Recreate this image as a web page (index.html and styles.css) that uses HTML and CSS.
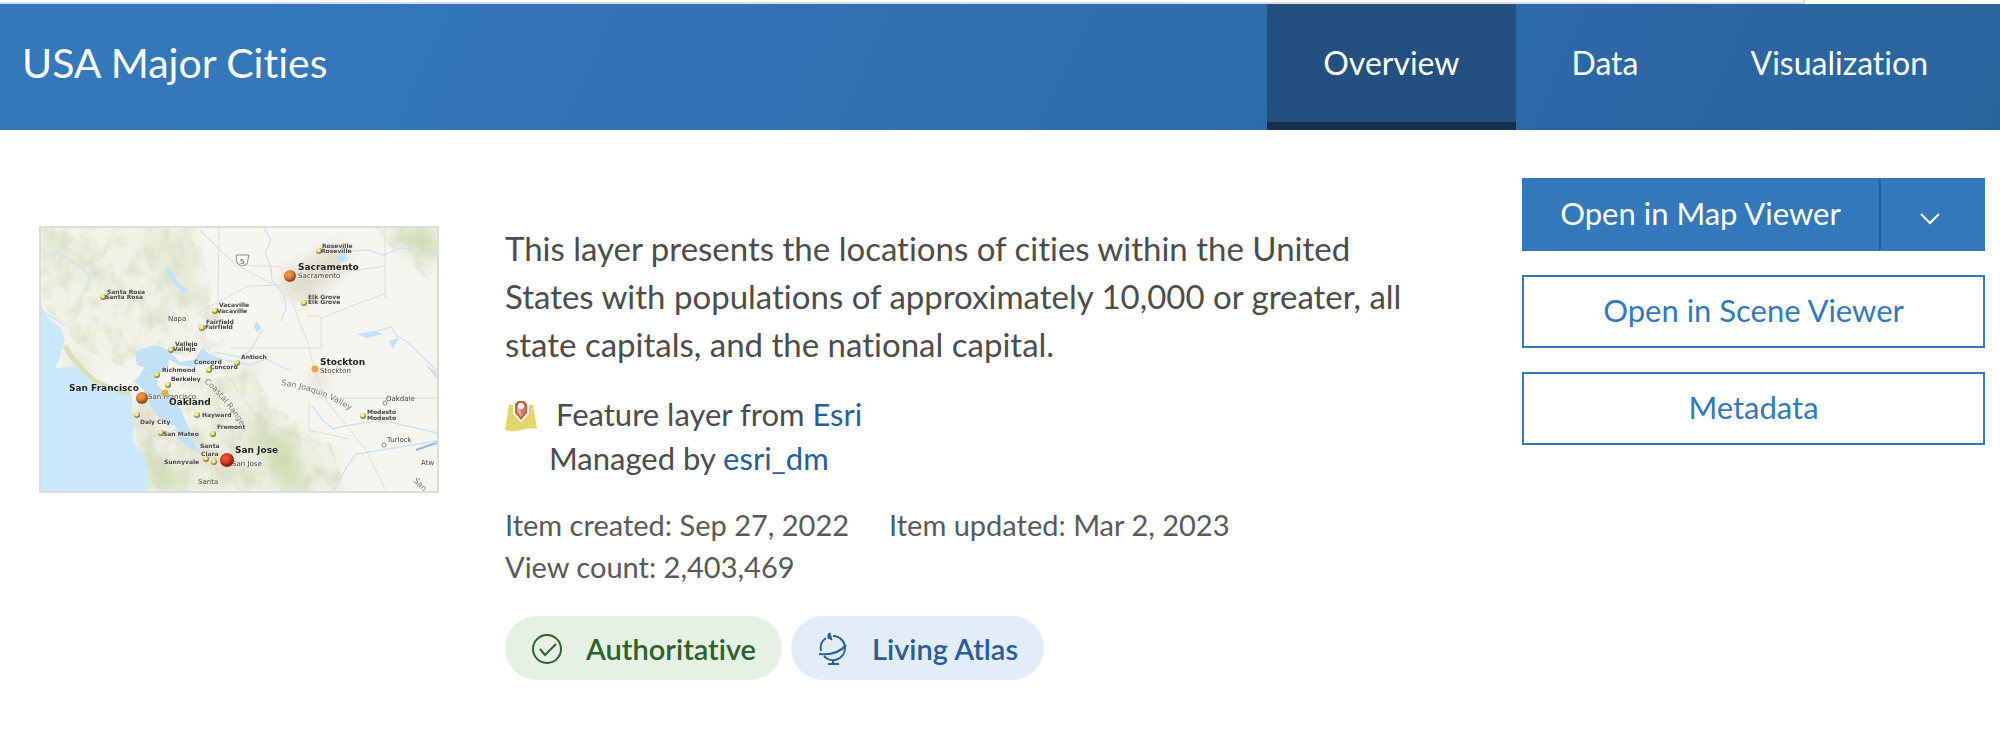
FILE: index.html
```html
<!DOCTYPE html>
<html lang="en">
<head>
<meta charset="utf-8">
<title>USA Major Cities</title>
<link rel="stylesheet" href="styles.css">
</head>
<body>
<div class="topline"></div>
<header class="banner">
  <h1 class="title">USA Major Cities</h1>
  <nav class="tabs">
    <a class="tab tab-active" href="#overview">Overview</a>
    <a class="tab" href="#data">Data</a>
    <a class="tab" href="#visualization">Visualization</a>
  </nav>
</header>
<main class="content">
  <svg class="thumb" viewBox="0 0 396 263" preserveAspectRatio="none" role="img" aria-label="Map of Northern California cities">
    <defs>
      <filter id="soft" x="-30%" y="-30%" width="160%" height="160%"><feGaussianBlur stdDeviation="8"/></filter>
      <filter id="pix" x="-5%" y="-5%" width="110%" height="110%"><feGaussianBlur stdDeviation=".7"/></filter>
      <filter id="relief" x="0" y="0" width="100%" height="100%"><feTurbulence type="fractalNoise" baseFrequency=".07 .05" numOctaves="4" seed="8"/><feColorMatrix values="0 0 0 0 .62  0 0 0 0 .67  0 0 0 0 .47  2.4 0 0 0 -1.05"/></filter>
      <radialGradient id="orange" cx="40%" cy="35%"><stop offset="0" stop-color="#f49a54"/><stop offset=".7" stop-color="#e27a2e"/><stop offset="1" stop-color="#9b5220"/></radialGradient>
      <radialGradient id="red" cx="40%" cy="35%"><stop offset="0" stop-color="#f35a3c"/><stop offset=".7" stop-color="#d93922"/><stop offset="1" stop-color="#8d2415"/></radialGradient>
      <radialGradient id="yellow" cx="40%" cy="35%"><stop offset="0" stop-color="#fffbae"/><stop offset=".6" stop-color="#eee36e"/><stop offset="1" stop-color="#827d4c"/></radialGradient>
      <clipPath id="hills"><path d="M0 0H155L170 60L190 110L170 135L120 122L94 130L90 190L100 263H305L290 215L235 180L210 140L190 150L150 150L120 165L105 175L94 145L40 120L0 75ZM335 0H396V60L345 15Z"/></clipPath>
    </defs>
    <rect width="396" height="263" fill="#f6f5f0"/>
    <g filter="url(#soft)">
      <path d="M0 0H145L165 60L150 110L95 130L60 135L0 85Z" fill="#f0f2e6"/>
      <path d="M100 0H150L158 80L130 70ZM0 10L50 20L60 45L0 40Z" fill="#e5ead5"/>
      <path d="M345 0H396V35L365 20Z" fill="#cfddb4"/>
      <path d="M150 150L200 150L240 185L300 230V263H120L100 225L140 225Z" fill="#eef0e2"/>
      <path d="M175 150L190 160L180 165ZM200 190L250 210L270 263H240ZM95 210L130 235L155 263H110ZM25 115L60 150L30 135Z" fill="#d3dfba"/>
      <path d="M240 45L255 40L300 15L305 35L265 75L245 65ZM270 145H285V160H270ZM95 170L110 180L115 210L95 205ZM115 205L200 235L210 255L180 245ZM190 140L220 140L210 155Z" fill="#dfdccb"/>
    </g>
    <g clip-path="url(#hills)"><rect width="396" height="263" filter="url(#relief)" opacity=".6"/></g>
    <g filter="url(#pix)">
      <path d="M0 78L7 90L20 100L24 112L18 132L14 140L28 139L34 136L46 146L60 157L78 161L91 166L91 182L94 193L91 208L94 217L102 224L107 243L106 263H0Z" fill="#cbe8fd"/>
      <path d="M24 118L30 128L43 143L54 153L65 158L77 163L89 165" fill="none" stroke="#d8e1ba" stroke-width="5"/>
      <path d="M94 127L99 121L115 117L127 122L139 134L153 132L161 120L170 127L184 132L166 136L151 139L137 137L128 131L127 140L116 146L117 157L127 169L140 181L146 196L155 218L160 224L150 221L139 213L135 198L122 195L114 184L108 176L103 162L93 153L99 147L103 139L96 137ZM124 38L133 46L135 52L148 64L142 65L132 55L125 45ZM295 28L302 24L308 31L298 35ZM215 93L220 99L217 105L213 99ZM316 106L334 103L342 106L325 110ZM348 113L358 110L352 121ZM384 136L396 145V151Z" fill="#c1e1f9"/>
      <g fill="none" stroke="#c9e3f5" stroke-width="1.3"><path d="M223 0L230 12L224 25L230 39L231 52L243 66L245 80L240 93M295 29L309 23L327 22L342 27L360 20L396 24M334 104L350 99L356 108L368 115L396 143M174 124L198 129L209 123L222 101M184 132L210 137L225 131L249 143M271 178L281 191L292 201L304 198M293 263L306 238L315 226L396 213M304 198L341 192L396 205M17 25L38 38L49 47L43 66M0 82L18 94"/><path d="M375 222Q385 218 396 215" stroke="#89bedb" stroke-width="2"/></g>
      <g fill="none" stroke="#dfddda" stroke-width="1"><path d="M159 2L184 27L195 37L240 39L246 60L256 87L267 115L274 145L285 172L325 222L345 263M196 37L235 58L256 51L344 38M244 57L207 58L159 84M265 88H280V120H190M344 0V70M274 170H396M268 175V202L308 211M178 0L177 76M280 90L345 65M160 110L185 145L216 190L270 215M110 173L126 197L172 225L200 263M98 175L108 205L146 219L179 235"/></g>
      <g fill="#fff" stroke="#888" stroke-width="1"><path d="M195 27H208L206 36L201 38L196 35Z"/><circle cx="344" cy="175" r="2"/><circle cx="343" cy="217" r="2"/></g>
      <g class="lbl small"><text x="281" y="20">Roseville</text><text x="280" y="25">Roseville</text><text x="66" y="66">Santa Rosa</text><text x="64" y="71">Santa Rosa</text><text x="178" y="79">Vacaville</text><text x="176" y="85">Vacaville</text><text x="165" y="96">Fairfield</text><text x="164" y="101">Fairfield</text><text x="134" y="118">Vallejo</text><text x="132" y="123">Vallejo</text><text x="267" y="71">Elk Grove</text><text x="267" y="76">Elk Grove</text><text x="200" y="131">Antioch</text><text x="153" y="136">Concord</text><text x="169" y="141">Concord</text><text x="121" y="144">Richmond</text><text x="130" y="153">Berkeley</text><text x="99" y="196">Daly City</text><text x="161" y="189">Hayward</text><text x="176" y="201">Fremont</text><text x="122" y="208">San Mateo</text><text x="159" y="220">Santa</text><text x="160" y="228">Clara</text><text x="123" y="236">Sunnyvale</text><text x="326" y="186">Modesto</text><text x="326" y="192">Modesto</text></g>
      <g class="lbl faint"><text x="127" y="93">Napa</text><text x="345" y="173">Oakdale</text><text x="346" y="214">Turlock</text><text x="157" y="256">Santa</text><text x="380" y="237">Atw</text><text x="199" y="36">5</text><text x="257" y="50">Sacramento</text><text x="279" y="145">Stockton</text><text x="107" y="171">San Francisco</text><text x="191" y="238">San Jose</text></g>
      <g class="lbl large"><text x="257" y="42">Sacramento</text><text x="279" y="137">Stockton</text><text x="28" y="163">San Francisco</text><text x="128" y="177">Oakland</text><text x="194" y="225">San Jose</text></g>
      <path id="valley" d="M240 157Q290 165 318 190" fill="none"/><path id="range" d="M163 154Q185 173 201 200" fill="none"/>
      <g class="lbl region"><text><textPath href="#valley">San Joaquin Valley</textPath></text><text><textPath href="#range">Coastal Range</textPath></text><text transform="translate(372 253) rotate(45)">San</text></g>
      <g fill="url(#yellow)"><circle cx="62" cy="69" r="3"/><circle cx="278" cy="23" r="3"/><circle cx="263" cy="75" r="3"/><circle cx="174" cy="83" r="3"/><circle cx="161" cy="100" r="3"/><circle cx="130" cy="122" r="3"/><circle cx="196" cy="135" r="3"/><circle cx="168" cy="142" r="3"/><circle cx="116" cy="147" r="3"/><circle cx="127" cy="157" r="3"/><circle cx="96" cy="187" r="3"/><circle cx="156" cy="187" r="3"/><circle cx="172" cy="206" r="3"/><circle cx="120" cy="205" r="3"/><circle cx="165" cy="231" r="3"/><circle cx="173" cy="234" r="3"/><circle cx="322" cy="188" r="3"/></g>
      <g fill="#e6ad3c"><circle cx="274" cy="141" r="3.5"/><circle cx="124" cy="165" r="3.5"/></g>
      <circle cx="249" cy="48" r="6" fill="url(#orange)"/><circle cx="101" cy="170" r="6" fill="url(#orange)"/><circle cx="186" cy="232" r="7" fill="url(#red)"/>
    </g>
  </svg>
  <section class="details">
    <p class="summary">This layer presents the locations of cities within the United States with populations of approximately 10,000 or greater, all state capitals, and the national capital.</p>
    <div class="source">
      <svg class="layer-icon" viewBox="0 0 32 32" aria-hidden="true"><path d="M4 4Q7 6 10 4L22 4Q25 6 28 4L32 29Q24 27 16 30Q8 32 0 30Z" fill="#e3d56d"/><path d="M8 2H24V14L16 22L8 14Z" fill="#fff"/><path d="M13 1H19L22 4V13L16 20L10 13V4Z" fill="#c0603d"/><path d="M12 6H20V12L16 17L12 12Z" fill="#e4a58e"/><path d="M16 9V17L20 12V7Z" fill="#cf7d62"/><circle cx="16" cy="6" r="3" fill="#fff"/></svg>
      <p class="source-line">Feature layer from <a href="#esri">Esri</a></p>
      <p class="manager-line">Managed by <a href="#esri_dm">esri_dm</a></p>
    </div>
    <div class="meta"><span>Item created: Sep 27, 2022</span><span>Item updated: Mar 2, 2023</span><span class="views">View count: 2,403,469</span></div>
    <div class="badges">
      <span class="badge green"><svg class="badge-icon" viewBox="0 0 32 32" aria-hidden="true"><circle cx="16" cy="17" r="14"/><path d="M9 17L14 23L25 12"/></svg>Authoritative</span>
      <span class="badge blue"><svg class="badge-icon" viewBox="0 0 32 32" aria-hidden="true"><path d="M9 6A12 12 0 0 0 4 19M16 4A12 12 0 0 1 28 16A12 12 0 0 1 7 24M2 22Q20 24 29 13M16 28V32M11 32H22"/><path d="M11 6V2L13 1L15 8Z" fill="currentColor" stroke-width="1"/></svg>Living Atlas</span>
    </div>
  </section>
  <aside class="actions">
    <div class="split"><button class="btn primary" type="button">Open in Map Viewer</button><button class="btn primary more" type="button" aria-label="More viewers"><svg class="chevron" viewBox="0 0 20 12" aria-hidden="true"><path d="M1 1L10 10L19 1"/></svg></button></div>
    <button class="btn" type="button">Open in Scene Viewer</button>
    <button class="btn" type="button">Metadata</button>
  </aside>
</main>
</body>
</html>
```
FILE: styles.css
```css
* { box-sizing: border-box; }
body { margin: 0; background: #fff; color: #4c4c4c; font-family: Lato, "Open Sans", sans-serif; font-variant-ligatures: no-common-ligatures; }
h1, p { margin: 0; font-weight: 400; }
a { color: #265e98; text-decoration: none; }
.topline { height: 4px; margin-right: 195px; border-right: 2px solid #dcdcdc; border-bottom: 2px solid #dcdcdc; box-shadow: 195px 2px 0 -2px #dcdcdc; }
.banner { display: flex; justify-content: space-between; min-height: 126px; padding: 0 28px 0 22px; background: linear-gradient(115deg, #3478bc 10%, #2d6aa9 70%, #2a639c); color: #fff; }
.title { font-size: 41px; line-height: 118px; }
.tabs { display: flex; }
.tab { padding: 0 56px; border-bottom: 8px solid transparent; color: #fff; font-size: 32px; line-height: 118px; }
.tab:last-child { padding-right: 44px; }
.tab-active { border-color: #142f4b; background: #23507f; }
.content { display: flex; align-items: flex-start; padding: 48px 15px 48px 39px; }
.thumb { flex: none; width: 400px; height: 267px; margin: 48px 66px 0 0; border: 2px solid #dcdcdc; }
.lbl { font-family: "DejaVu Sans", sans-serif; font-weight: 700; fill: #444; stroke: #f6f5f0; stroke-width: 1px; stroke-opacity: .6; paint-order: stroke; }
.small { font-size: 6px; }
.large { font-size: 9px; fill: #222; }
.faint { font-size: 7px; font-weight: 400; }
.region { font-size: 8px; font-weight: 400; fill: #777; }
.details { flex: 1; margin-top: 46px; }
.summary { max-width: 920px; font-size: 33px; line-height: 48px; }
.source { display: grid; grid-template-columns: 32px 1fr; margin-top: 24px; font-size: 31px; line-height: 44px; }
.layer-icon { width: 32px; height: 32px; margin-top: 8px; }
.source-line { padding-left: 19px; }
.manager-line { grid-column: 2; padding-left: 12px; }
.meta { display: flex; flex-wrap: wrap; column-gap: 40px; margin-top: 24px; color: #595959; font-size: 29px; line-height: 42px; }
.views { flex-basis: 100%; }
.badges { display: flex; gap: 9px; margin-top: 28px; }
.badge { display: flex; align-items: center; gap: 23px; height: 64px; padding: 0 26px; border-radius: 32px; font-size: 29px; font-weight: 600; }
.green { background: #e6f0e4; color: #2b622b; }
.blue { background: #e2edf9; color: #265e98; }
.badge-icon { width: 32px; height: 34px; overflow: visible; fill: none; stroke: currentColor; stroke-width: 2; }
.actions { display: flex; flex: none; flex-direction: column; gap: 24px; width: 463px; }
.split { display: flex; }
.split .btn:first-child { flex: 1; }
.btn { height: 73px; padding: 0 12px 4px; border: 2px solid #3478bc; background: #fff; color: #3478bc; font: inherit; font-size: 31px; }
.primary { background: #3478bc; color: #fff; }
.more { width: 106px; padding-right: 16px; border-left-color: #265e98; }
.chevron { width: 20px; height: 12px; fill: none; stroke: #fff; stroke-width: 2; }
```
